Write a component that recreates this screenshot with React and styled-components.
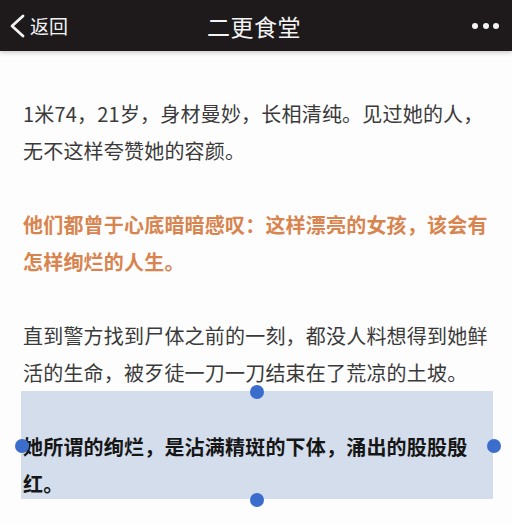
import React from "react";
import styled, { createGlobalStyle } from "styled-components";

const Global = createGlobalStyle`
  html, body { margin: 0; padding: 0; background: #fdfdfd; }
  body { font-family: "Noto Sans CJK SC", "Noto Sans", sans-serif; }
`;

const Page = styled.div`
  width: 512px;
  height: 524px;
  overflow: hidden;
  background: #fdfdfd;
  display: flex;
  flex-direction: column;
`;

const NavBar = styled.header`
  position: relative;
  height: 51px;
  flex: none;
  background: #1e1a1c;
  display: grid;
  grid-template-columns: 1fr auto 1fr;
  align-items: center;
  padding: 0 13px 0 9px;
  box-shadow: 0 2px 4px rgba(0, 0, 0, 0.18);
  z-index: 1;
`;

const Back = styled.div`
  display: flex;
  align-items: center;
  gap: 4px;
  color: #f2f2f2;
  font-size: 19px;
  line-height: 1;
`;

const Title = styled.h1`
  margin: 0;
  color: #f4f4f4;
  font-size: 23px;
  font-weight: 400;
  letter-spacing: 0.5px;
`;

const More = styled.div`
  justify-self: end;
  display: flex;
  gap: 4.5px;
  padding-top: 1px;
`;

const Dot = styled.span`
  width: 6px;
  height: 6px;
  border-radius: 50%;
  background: #f4f4f4;
`;

const Article = styled.main`
  padding: 44px 19px 0 21px;
  display: flex;
  flex-direction: column;
`;

const Para = styled.p`
  position: relative;
  margin: 0 0 ${(p) => (p.$selected ? "0" : "37px")};
  padding: ${(p) => (p.$selected ? "37px 1px 0 2px" : "0 1px 0 2px")};
  font-size: 20px;
  line-height: 37px;
  letter-spacing: 0.2px;
  color: ${(p) => (p.$tone === "orange" ? "#d8844f" : p.$tone === "strong" ? "#161616" : "#3a3a3a")};
  font-weight: ${(p) => (p.$bold ? 700 : 400)};
  background: ${(p) => (p.$selected ? "#d4ddec" : "transparent")};
  ${(p) => (p.$selected ? "margin-top: -37px; height: 108px; box-sizing: border-box;" : "")}
`;

const Handle = styled.span`
  position: absolute;
  width: 14px;
  height: 14px;
  border-radius: 50%;
  background: #3b6dcc;
  transform: translate(-50%, -50%);
  left: ${(p) => p.$x};
  top: ${(p) => p.$y};
`;

export default function App() {
  return (
    <>
      <Global />
      <Page>
        <NavBar>
          <Back>
            <svg width="17" height="24" viewBox="0 0 17 24">
              <polyline points="14,2 3,12 14,22" fill="none" stroke="#f2f2f2" strokeWidth="2.8" strokeLinecap="round" strokeLinejoin="round" />
            </svg>
            <span>返回</span>
          </Back>
          <Title>二更食堂</Title>
          <More>
            <Dot />
            <Dot />
            <Dot />
          </More>
        </NavBar>
        <Article>
          <Para>1米74，21岁，身材曼妙，长相清纯。见过她的人，无不这样夸赞她的容颜。</Para>
          <Para $tone="orange" $bold>他们都曾于心底暗暗感叹：这样漂亮的女孩，该会有怎样绚烂的人生。</Para>
          <Para>直到警方找到尸体之前的一刻，都没人料想得到她鲜活的生命，被歹徒一刀一刀结束在了荒凉的土坡。</Para>
          <Para $tone="strong" $bold $selected>
            她所谓的绚烂，是沾满精斑的下体，涌出的股股殷红。
            <Handle $x="50%" $y="1px" />
            <Handle $x="50%" $y="calc(100% + 1px)" />
            <Handle $x="1px" $y="55px" />
            <Handle $x="calc(100% + 1px)" $y="55px" />
          </Para>
        </Article>
      </Page>
    </>
  );
}
